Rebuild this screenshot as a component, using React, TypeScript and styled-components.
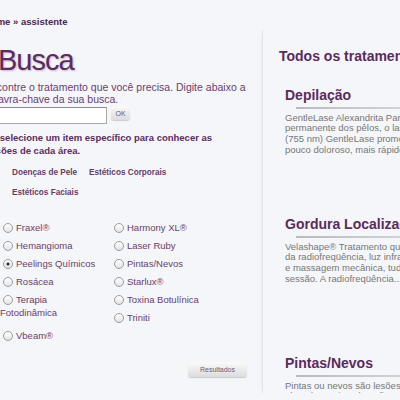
import styled, { createGlobalStyle } from "styled-components";

const GlobalStyle = createGlobalStyle`
  html, body {
    margin: 0;
    background: #f4f6f9;
    overflow: hidden;
  }
  body {
    font-family: "Liberation Sans", Arial, sans-serif;
  }
`;

const Page = styled.div`
  display: flex;
  align-items: flex-start;
  width: 430px;
  margin-left: -16px;
  padding-top: 16px;
`;

const Main = styled.div`
  width: 266px;
  flex-shrink: 0;
  margin-right: 12px;
`;

const Crumbs = styled.div`
  font-size: 9.5px;
  font-weight: bold;
  line-height: 12px;
  color: #4f2652;
`;

const Title = styled.h1`
  margin: 15px 0 0 14px;
  font-size: 29px;
  font-weight: normal;
  line-height: 34px;
  letter-spacing: -1px;
  color: #5d2b60;
  text-shadow: 1px 1px 2px rgba(60, 20, 60, 0.25);
`;

const Intro = styled.p`
  margin: 4px 0 0;
  font-size: 10.5px;
  line-height: 12px;
  color: #6c3d6d;
`;

const SearchRow = styled.div`
  display: flex;
  align-items: flex-start;
  gap: 4px;
  margin-top: 2px;
`;

const SearchInput = styled.input`
  width: 123px;
  height: 17px;
  box-sizing: border-box;
  border: 1px solid #a9a9a9;
  border-top-color: #8c8c8c;
  background: #fff;
  padding: 0 3px;
  font-family: inherit;
  font-size: 10px;
  outline: none;
`;

const GreyButton = styled.button<{ $w: number; $h: number }>`
  width: ${({ $w }) => $w}px;
  height: ${({ $h }) => $h}px;
  padding: 0;
  border: 0;
  border-radius: 3px;
  background: linear-gradient(#fafafa, #dcdcde);
  box-shadow: 0 1px 1px rgba(0, 0, 0, 0.18);
  font-family: inherit;
  font-size: 7px;
  color: #6b5d6b;
`;

const Hint = styled.p`
  margin: 7px 0 0;
  font-size: 9.5px;
  font-weight: bold;
  line-height: 13px;
  color: #5c2c5e;
`;

const Areas = styled.div`
  display: flex;
  flex-wrap: wrap;
  width: 200px;
  column-gap: 12px;
  row-gap: 8px;
  margin: 10px 0 0 28px;
`;

const AreaLink = styled.a`
  font-size: 8.2px;
  font-weight: bold;
  line-height: 12px;
  color: #6a3a6c;
  text-decoration: none;
`;

const Options = styled.div`
  display: flex;
  margin: 19px 0 0 16px;
`;

const OptionColumn = styled.div<{ $w: number }>`
  width: ${({ $w }) => $w}px;
  margin-right: 11px;
`;

const Option = styled.label<{ $extra?: boolean }>`
  display: block;
  padding: 2.5px 0;
  margin-bottom: ${({ $extra }) => ($extra ? 5 : 0)}px;
  font-size: 9.5px;
  line-height: 13px;
  color: #6c3d6d;
`;

const Radio = styled.input`
  appearance: none;
  display: inline-block;
  width: 10px;
  height: 10px;
  margin: 0 3px 0 3px;
  vertical-align: -2px;
  border: 1px solid #9c9c9c;
  border-radius: 50%;
  background: linear-gradient(#ffffff, #e3e3e5);
  box-sizing: border-box;

  &:checked {
    background: radial-gradient(circle, #333 0 1.3px, transparent 1.8px),
      linear-gradient(#ffffff, #e3e3e5);
  }
`;

const Actions = styled.div`
  display: flex;
  justify-content: flex-end;
  padding-right: 3px;
  margin-top: 18px;
`;

const Panel = styled.div`
  flex: 1;
  height: 345px;
  margin-top: 14px;
  padding: 18px 0 0 16px;
  border-left: 1px solid #e2e3e8;
  box-shadow: -4px 0 6px -4px rgba(0, 0, 0, 0.05);
  white-space: nowrap;
`;

const PanelTitle = styled.h2`
  margin: 0;
  font-size: 14px;
  font-weight: bold;
  line-height: 17px;
  color: #5b2b5d;
`;

const Treatment = styled.section<{ $h: number }>`
  height: ${({ $h }) => $h}px;
  margin-left: 6px;
  &:first-of-type {
    margin-top: 21.5px;
  }
`;

const TreatmentTitle = styled.h3`
  margin: 0;
  font-size: 14px;
  font-weight: bold;
  line-height: 17px;
  color: #5b2b5d;
`;

const Rule = styled.div`
  height: 2px;
  margin: 3px 0 0 11px;
  background: linear-gradient(to right, #b9b9bf, #d4d4d8 60%, #e4e4e8);
`;

const Summary = styled.p`
  margin: 4px 0 0;
  font-size: 9.5px;
  line-height: 10.7px;
  color: #777;
`;

const left = [
  { name: "Fraxel®" },
  { name: "Hemangioma" },
  { name: "Peelings Químicos", checked: true },
  { name: "Rosácea" },
  { name: "Terapia Fotodinâmica", extra: true },
  { name: "Vbeam®" },
];

const right = [
  "Harmony XL®",
  "Laser Ruby",
  "Pintas/Nevos",
  "Starlux®",
  "Toxina Botulínica",
  "Triniti",
];

const treatments = [
  {
    title: "Depilação",
    h: 129,
    lines: [
      "GentleLase Alexandrita Para a remoção",
      "permanente dos pêlos, o laser Alexandrita",
      "(755 nm) GentleLase promove um tratamento",
      "pouco doloroso, mais rápido e eficaz...",
    ],
  },
  {
    title: "Gordura Localizada",
    h: 139,
    lines: [
      "Velashape® Tratamento que combina a energia",
      "da radiofreqüência, luz infravermelha, vácuo",
      "e massagem mecânica, tudo em uma única",
      "sessão. A radiofreqüência...",
    ],
  },
  {
    title: "Pintas/Nevos",
    h: 60,
    lines: [
      "Pintas ou nevos são lesões planas ou",
      "elevadas, cuja coloração pode variar",
    ],
  },
];

export default function App() {
  return (
    <>
      <GlobalStyle />
      <Page>
        <Main>
          <Crumbs>Home » assistente</Crumbs>
          <Title>Busca</Title>
          <Intro>
            Encontre o tratamento que você precisa. Digite abaixo a
            <br />
            palavra-chave da sua busca.
          </Intro>
          <SearchRow>
            <SearchInput type="text" />
            <GreyButton $w={19} $h={14} style={{ marginTop: -1 }}>
              OK
            </GreyButton>
          </SearchRow>
          <Hint>
            Ou selecione um item específico para conhecer as
            <br />
            opções de cada área.
          </Hint>
          <Areas>
            <AreaLink href="#">Doenças de Pele</AreaLink>
            <AreaLink href="#">Estéticos Corporais</AreaLink>
            <AreaLink href="#">Estéticos Faciais</AreaLink>
          </Areas>
          <Options>
            <OptionColumn $w={100}>
              {left.map((o) => (
                <Option key={o.name} $extra={o.extra}>
                  <Radio type="radio" name="t" defaultChecked={o.checked} />
                  {o.name}
                </Option>
              ))}
            </OptionColumn>
            <OptionColumn $w={120}>
              {right.map((n) => (
                <Option key={n}>
                  <Radio type="radio" name="t" />
                  {n}
                </Option>
              ))}
            </OptionColumn>
          </Options>
          <Actions>
            <GreyButton $w={59} $h={15}>Resultados</GreyButton>
          </Actions>
        </Main>
        <Panel>
          <PanelTitle>Todos os tratamentos</PanelTitle>
          {treatments.map((t) => (
            <Treatment key={t.title} $h={t.h}>
              <TreatmentTitle>{t.title}</TreatmentTitle>
              <Rule />
              <Summary>
                {t.lines.map((l, i) => (
                  <span key={i}>
                    {l}
                    <br />
                  </span>
                ))}
              </Summary>
            </Treatment>
          ))}
        </Panel>
      </Page>
    </>
  );
}
